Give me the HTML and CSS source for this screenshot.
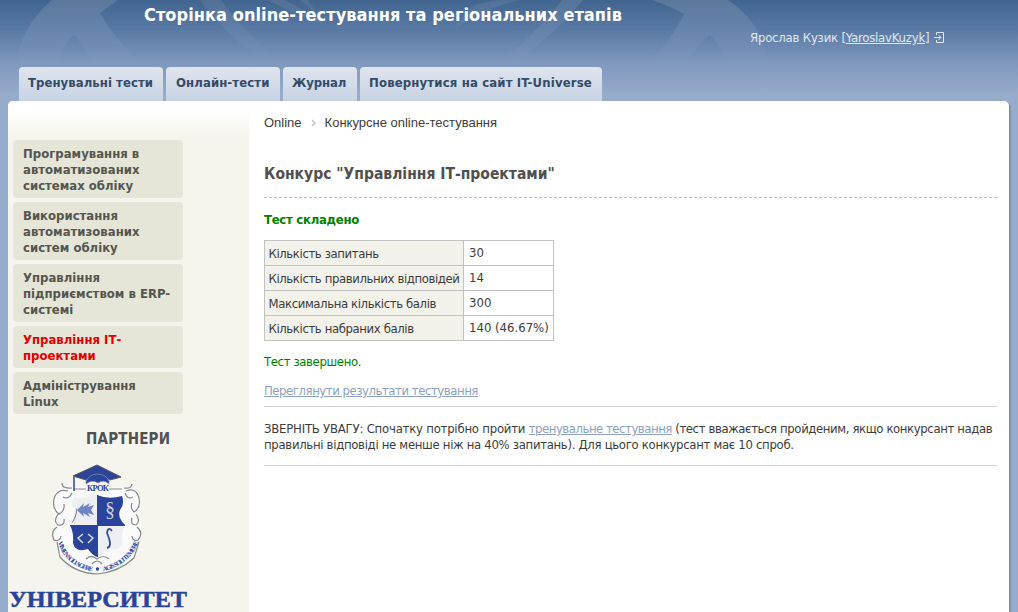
FILE: index.html
```html
<!DOCTYPE html>
<html lang="uk">
<head>
<meta charset="utf-8">
<title>Сторінка online-тестування</title>
<link rel="stylesheet" href="styles.css">
</head>
<body>
<header class="header">
  <svg class="header-art" width="1018" height="67" viewBox="0 0 1018 67">
    <defs>
      <linearGradient id="fade" gradientUnits="userSpaceOnUse" x1="0" y1="0" x2="0" y2="65">
        <stop offset="0" stop-color="#c2c4ca" stop-opacity=".2"/>
        <stop offset=".5" stop-color="#9fb4dc" stop-opacity=".18"/>
        <stop offset="1" stop-color="#93a9d4" stop-opacity="0"/>
      </linearGradient>
    </defs>
    <g fill="url(#fade)">
      <path d="M52 0H118L100 13Q115 40 145 67H94Q86 48 74 35Q60 46 60 67H16Q20 27 52 0Z"/>
      <path d="M200 0H221Q243 32 288 67H272Q225 35 200 0Z" opacity=".6"/>
      <path d="M268 0H284Q303 8 325 25Q298 15 268 0Z" opacity=".6"/>
      <path d="M300 0H308L317 14Z" opacity=".6"/>
      <path d="M470 8Q484 0 505 0H520Q485 8 455 28Z" opacity=".6"/>
      <path d="M562 0H583Q556 32 511 67H495Q535 35 562 0Z" opacity=".8"/>
      <path d="M652 0H728Q765 25 768 67H728Q722 46 710 35Q694 45 690 67H644Q672 40 684 14Q670 6 652 0Z"/>
    </g>
  </svg>
  <h1 class="site-title">Сторінка online-тестування та регіональних етапів</h1>
  <div class="user">Ярослав Кузик [<a href="#">YaroslavKuzyk</a>]
    <svg class="logout" width="11" height="12" viewBox="0 0 11 12" fill="none" stroke="#dfe8f4"><path d="M2.500 3V.5H9.500V10.500H2.500V8M0 5.500H7M4.500 3L7 5.500L4.500 8"/></svg>
  </div>
  <nav class="tabs">
    <a class="tab tab-training" href="#">Тренувальні тести</a>
    <a class="tab tab-online" href="#">Онлайн-тести</a>
    <a class="tab tab-journal" href="#">Журнал</a>
    <a class="tab tab-back" href="#">Повернутися на сайт IT-Universe</a>
  </nav>
</header>
<div class="panel">
  <aside class="sidebar">
    <nav class="menu">
      <a class="menu-item" href="#">Програмування в автоматизованих системах обліку</a>
      <a class="menu-item" href="#">Використання автоматизованих систем обліку</a>
      <a class="menu-item" href="#">Управління підприємством в ERP-системі</a>
      <a class="menu-item active" href="#">Управління ІТ-проектами</a>
      <a class="menu-item" href="#">Адміністрування Linux</a>
    </nav>
    <h3 class="partners">ПАРТНЕРИ</h3>
    <svg class="crest" width="182" height="152" viewBox="8 460 182 152">
      <defs>
        <path id="mottoLeft" d="M58 542Q65 567 96 572"/>
        <path id="mottoRight" d="M99 572Q131 566 139 540"/>
      </defs>
      <path d="M66 484Q56 486 54 497Q50 508 55 517Q50 530 56 539L60 558Q78 573 97 573Q117 572 134 557L138 540Q144 530 139 517Q143 505 138 494Q132 485 122 487L72 487Z" fill="#fafafa"/>
      <g fill="none" stroke="#84888c" stroke-width="1.200">
        <path d="M72 488Q62 489 62 483M68 491Q57 488 54 499Q52 509 59 514Q65 511 64 504M63 497Q69 500 72 493M58 514Q53 522 58 525Q65 526 64 519M57 527Q50 532 54 540Q60 542 61 536M74 500Q80 512 72 523M124 488Q132 489 132 484M126 491Q136 487 139 498Q141 508 134 512Q130 508 132 503M133 497Q127 500 125 493M136 514Q141 521 136 525Q130 525 132 518M137 527Q144 533 138 540Q133 542 132 536M74 489H86M109 489H122"/>
        <path d="M57 542L60 557Q74 573 97 574Q119 572 134 558L139 542"/>
        <path d="M86 559Q91 554 97 559Q104 554 109 559M92 564Q97 558 102 564"/>
      </g>
      <path d="M74 497Q82 500 97 494V525H70Q80 515 77 509Q68 506 74 497Z" fill="#eeeff3"/>
      <path d="M97 495Q109 500 122 496Q125 504 120 510Q117 517 125 525H97Z" fill="#2a439b"/>
      <path d="M70 525H97V557Q91 554 88 549Q75 553 73 543Q74 533 70 525Z" fill="#2a439b"/>
      <path d="M98 525H125Q120 536 123 544Q118 551 108 549Q102 556 98 557Z" fill="#eeeff3"/>
      <path d="M97.500 495V557M70 525.500H125" stroke="#464646"/>
      <path d="M77 510L84 503L83 507L90 503L88 507L94 505L91 510L94 515L88 513L90 517L83 513L84 517Z" fill="#6d83c2"/>
      <path d="M83 534L78 538L83 543M88 534L93 538L88 543" fill="none" stroke="#dce1ed" stroke-width="1.400"/>
      <text x="105" y="516" class="crest-section">§</text>
      <path d="M112 531Q108 526 107 533Q113 547 107 548" fill="none" stroke="#334aa1" stroke-width="1.800"/>
      <path d="M73 476L97 465L121 477L110 480Q98 471 86 480Z" fill="#2a439b" stroke="#555"/>
      <path d="M86 481Q90 474 97 474Q106 474 109 481V484Q104 479 98 483Q92 479 86 484Z" fill="#2a439b" stroke="#8a93a8" stroke-width=".7"/>
      <path d="M74 477V491" stroke="#2a439b" stroke-width="1.500"/>
      <text x="87" y="491" class="crest-name" textLength="22">КРОК</text>
      <text class="motto"><textPath href="#mottoLeft" textLength="48">VIMEN SOLI AGERE</textPath></text>
      <text class="motto"><textPath href="#mottoRight" startOffset="4" textLength="48">AGIS SOLI TEMERE</textPath></text>
      <circle cx="97.500" cy="569" r="1.700" fill="#2a439b"/>
      <text x="9" y="606.500" class="university" textLength="178" lengthAdjust="spacingAndGlyphs">УНІВЕРСИТЕТ</text>
    </svg>
  </aside>
  <main class="content">
    <div class="crumbs">
      <span>Online</span>
      <svg width="5" height="8" viewBox="0 0 5 8" fill="none" stroke="#b9bfc0" stroke-width="1.300"><path d="M1 1L4 4L1 7"/></svg>
      <span>Конкурсне online-тестування</span>
    </div>
    <h2 class="heading">Конкурс "Управління ІТ-проектами"</h2>
    <svg class="dashes" width="733" height="1"><path d="M0 .5H733" stroke="#c1c1c1" stroke-dasharray="3 2"/></svg>
    <p class="passed">Тест складено</p>
    <table class="results">
      <tr><th>Кількість запитань</th><td>30</td></tr>
      <tr><th>Кількість правильних відповідей</th><td>14</td></tr>
      <tr><th>Максимальна кількість балів</th><td>300</td></tr>
      <tr><th>Кількість набраних балів</th><td>140 (46.67%)</td></tr>
    </table>
    <p class="finished">Тест завершено.</p>
    <p class="review"><a href="#">Переглянути результати тестування</a></p>
    <p class="notice"><span class="notice-lead">ЗВЕРНІТЬ УВАГУ: Спочатку потрібно пройти </span><a href="#">тренувальне тестування</a><span class="notice-rule"> (тест вважається пройденим, якщо конкурсант надав</span><br>правильні відповіді не менше ніж на 40% запитань). Для цього конкурсант має 10 спроб.</p>
  </main>
</div>
</body>
</html>
```
FILE: styles.css
```css
* { box-sizing: border-box; }
html { height: 612px; overflow: hidden; }
body {
  margin: 0;
  height: 612px;
  overflow: hidden;
  background: #97abcb;
  color: #3c3c3c;
  font: 13px/16px "DejaVu Sans Condensed", "DejaVu Sans", sans-serif;
}
h1, h2, h3, p { margin: 0; }
.header {
  position: relative;
  height: 101px;
  display: grid;
  grid-template-rows: 30px 37px 34px;
  background: linear-gradient(#41658f 0, #5b7ba5 32px, #7e97bc 62px, #97abcb 94px);
}
.header-art { position: absolute; left: 0; top: 0; }
.site-title {
  position: relative;
  padding: 4px 0 0 144px;
  font-size: 18px;
  line-height: 22px;
  letter-spacing: .05px;
  color: #fff;
}
.user {
  position: relative;
  padding-left: 750px;
  letter-spacing: -.2px;
  color: #dfe8f4;
}
.user a { color: inherit; }
.logout { margin-left: 1px; vertical-align: -2px; }
.tabs {
  position: relative;
  display: flex;
  gap: 3px;
  padding-left: 19px;
}
.tab {
  padding: 8px 0 0 9px;
  border-radius: 4px 4px 0 0;
  background: linear-gradient(#dfe5ee, #c7d2e3);
  color: #334b68;
  font-weight: bold;
  text-decoration: none;
  white-space: nowrap;
}
.tab-training { width: 144px; letter-spacing: .06px; }
.tab-online { width: 114px; padding-left: 10px; letter-spacing: .1px; }
.tab-journal { width: 74px; letter-spacing: -.1px; }
.tab-back { width: 242px; letter-spacing: .16px; }
.panel {
  display: flex;
  width: 1001px;
  height: 511px;
  margin-left: 8px;
  border-radius: 5px 5px 0 0;
  background: #fff;
  box-shadow: 2px 2px 1px #7c91b0;
}
.sidebar {
  width: 241px;
  padding: 39px 0 0 5px;
  border-radius: 5px 0 0 0;
  background: linear-gradient(#fff 0, #fff 9px, #f5f5ed 36px);
}
.menu { display: flex; flex-direction: column; gap: 4px; width: 170px; }
.menu-item {
  padding: 6px 10px 4px;
  border-radius: 4px;
  background: #e5e6d8;
  color: #555550;
  font-weight: bold;
  text-decoration: none;
}
.menu-item.active { color: #e00000; }
.partners {
  padding: 15px 0 0 73px;
  font-size: 15px;
  line-height: 20px;
  letter-spacing: .2px;
  color: #515151;
}
.crest { display: block; margin: 11px 0 0 -5px; }
.crest-section { font: 20px "Liberation Serif", serif; fill: #c9d0df; }
.crest-name { font: bold 8.5px "Liberation Serif", serif; fill: #2a439b; }
.motto { font: bold 6.5px "Liberation Serif", serif; fill: #2a439b; }
.university { font: bold 24px "Liberation Serif", serif; fill: #2a439b; stroke: #2a439b; stroke-width: .5px; }
.content { width: 748px; padding: 14px 0 0 15px; }
.crumbs {
  display: flex;
  align-items: center;
  gap: 9px;
  height: 16px;
  font-family: "Liberation Sans", Arial, sans-serif;
}
.heading {
  margin-top: 33px;
  font-size: 15.5px;
  line-height: 20px;
  color: #505050;
}
.dashes { display: block; margin-top: 13px; }
.passed { margin-top: 14px; font-weight: bold; letter-spacing: -.27px; color: #008000; }
.results { margin-top: 12px; border-collapse: collapse; }
.results th, .results td { height: 25px; border: 1px solid #c1c1c1; text-align: left; }
.results th {
  width: 199px;
  padding: 2px 0 0 3.5px;
  background: #f2f1ea;
  font-weight: normal;
  letter-spacing: -.39px;
}
.results td { width: 90px; padding: 0 0 0 5px; }
.finished { margin-top: 13px; letter-spacing: -.37px; color: #008000; }
.content a { color: #8ca1bf; }
.review {
  width: 733px;
  margin-top: 13px;
  padding-bottom: 7px;
  border-bottom: 1px solid #cfcfcf;
  letter-spacing: -.45px;
}
.notice {
  width: 733px;
  padding: 14px 0 12px;
  border-bottom: 1px solid #cfcfcf;
  letter-spacing: -.31px;
  white-space: nowrap;
}
.notice a { letter-spacing: -.47px; }
.notice-lead { letter-spacing: -.22px; }
.notice-rule { letter-spacing: -.39px; }
```
